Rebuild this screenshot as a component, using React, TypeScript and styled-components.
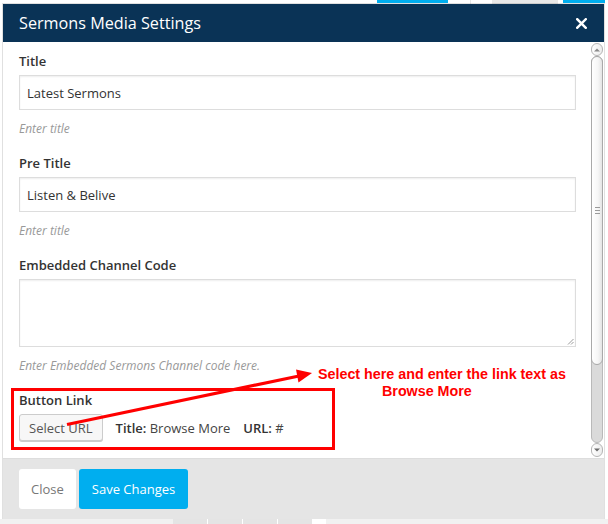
import React from "react";
import styled, { createGlobalStyle } from "styled-components";

const GlobalStyle = createGlobalStyle`
  html, body { margin: 0; padding: 0; background: #ffffff; }
  body { font-family: "Open Sans", "Liberation Sans", sans-serif; }
  * { box-sizing: border-box; }
`;

const Page = styled.div`
  position: relative;
  width: 608px;
  height: 524px;
  overflow: hidden;
  background: #ffffff;
  display: flex;
  flex-direction: column;
`;

const TopStrip = styled.div`
  height: 4px;
  display: flex;
  align-items: flex-start;
`;

const StripBlock = styled.div<{ $x: number; $w: number; $c: string; $h?: number }>`
  margin-left: ${(p) => p.$x}px;
  width: ${(p) => p.$w}px;
  height: ${(p) => p.$h ?? 3}px;
  background: ${(p) => p.$c};
  flex: none;
`;

const BottomStrip = styled.div`
  flex: 1;
  display: flex;
  background: #f1f1f1;
`;

const BottomBlock = styled.div<{ $w: number; $c: string }>`
  width: ${(p) => p.$w}px;
  background: ${(p) => p.$c};
  flex: none;
`;

const Modal = styled.div`
  margin-left: 3px;
  width: 601px;
  height: 515px;
  display: flex;
  flex-direction: column;
  background: #ffffff;
  box-shadow: 0 0 0 1px rgba(0, 0, 0, 0.12);
`;

const Header = styled.div`
  height: 38px;
  flex: none;
  background: #0a3356;
  display: flex;
  align-items: center;
  justify-content: space-between;
  padding: 0 17px 0 16px;
`;

const HeaderTitle = styled.div`
  color: #ffffff;
  font-size: 16.2px;
  font-weight: 400;
  padding-bottom: 1px;
`;

const CloseX = styled.svg`
  width: 11px;
  height: 11px;
  display: block;
`;

const Body = styled.div`
  height: 416px;
  flex: none;
  display: flex;
  padding: 1px 1px 1px 0;
`;

const Content = styled.div`
  flex: 1;
  padding: 9px 15px 0 16px;
  overflow: hidden;
`;

const Field = styled.div`
  margin-bottom: 17px;
`;

const Label = styled.div`
  font-size: 13px;
  line-height: 18px;
  font-weight: 600;
  color: #333333;
  margin-bottom: 5px;
`;

const TextInput = styled.div`
  height: 35px;
  border: 1px solid #dddddd;
  background: #ffffff;
  box-shadow: inset 0 1px 2px rgba(0, 0, 0, 0.07);
  display: flex;
  align-items: center;
  padding: 0 7px;
  font-size: 13px;
  color: #333333;
`;

const TextArea = styled.div`
  height: 68px;
  border: 1px solid #dddddd;
  background: #ffffff;
  box-shadow: inset 0 1px 2px rgba(0, 0, 0, 0.07);
  position: relative;
`;

const Grip = styled.svg`
  position: absolute;
  right: 1px;
  bottom: 1px;
  width: 7px;
  height: 7px;
`;

const Help = styled.div`
  margin-top: 10px;
  font-size: 12px;
  line-height: 17px;
  font-style: italic;
  color: #999999;
`;

const LinkRow = styled.div`
  display: flex;
  align-items: center;
  gap: 13px;
  font-size: 13px;
  color: #444444;
`;

const SelectButton = styled.div`
  height: 27px;
  padding: 0 9px;
  display: flex;
  align-items: center;
  border: 1px solid #cccccc;
  border-radius: 3px;
  background: #f7f7f7;
  box-shadow: 0 1px 0 #cccccc;
  color: #555555;
  font-size: 13px;
`;

const Meta = styled.span`
  color: #444444;
  b {
    font-weight: 600;
    color: #333333;
  }
`;

const Scrollbar = styled.div`
  width: 12px;
  flex: none;
  display: flex;
  flex-direction: column;
`;

const ScrollButton = styled.div<{ $h: number }>`
  height: ${(p) => p.$h}px;
  flex: none;
  border: 1px solid #b5b5b5;
  border-radius: 6px;
  background: linear-gradient(to right, #ffffff, #ececec);
  display: flex;
  align-items: center;
  justify-content: center;
`;

const Track = styled.div`
  flex: 1;
  display: flex;
  flex-direction: column;
  background: #dadada;
  border: 1px solid #b9b9b9;
  border-radius: 6px;
`;

const Thumb = styled.div`
  height: 309px;
  margin: -1px;
  border: 1px solid #a9a9a9;
  border-radius: 6px;
  background: linear-gradient(to right, #ffffff 0%, #f6f6f6 60%, #e4e4e4 100%);
  display: flex;
  align-items: center;
  justify-content: center;
`;

const Footer = styled.div`
  flex: 1;
  background: #e5e5e5;
  border-top: 1px solid #dddddd;
  display: flex;
  align-items: flex-start;
  gap: 3px;
  padding: 10px 16px 0;
`;

const FooterButton = styled.div<{ $primary?: boolean }>`
  height: 40px;
  display: flex;
  align-items: center;
  padding: 0 ${(p) => (p.$primary ? 13 : 12)}px;
  border-radius: 3px;
  font-size: 13px;
  background: ${(p) => (p.$primary ? "#00aeef" : "#ffffff")};
  color: ${(p) => (p.$primary ? "#ffffff" : "#777777")};
`;

const Annotation = styled.div`
  position: absolute;
  inset: 0;
  pointer-events: none;
`;

const RedBox = styled.div`
  position: absolute;
  left: 11px;
  top: 388px;
  width: 324px;
  height: 62px;
  border: 3px solid #ff0000;
`;

const ArrowSvg = styled.svg`
  position: absolute;
  left: 0;
  top: 0;
  width: 608px;
  height: 524px;
`;

const Note = styled.div`
  position: absolute;
  left: 318px;
  top: 366px;
  font-family: "Liberation Sans", Arial, sans-serif;
  font-weight: 700;
  font-size: 14.3px;
  line-height: 17px;
  color: #ff0000;
  white-space: nowrap;
`;

const NoteLine = styled.div<{ $indent?: number }>`
  padding-left: ${(p) => p.$indent ?? 0}px;
`;

export default function App() {
  return (
    <>
      <GlobalStyle />
      <Page>
        <TopStrip>
          <StripBlock $x={377} $w={71} $c="#00aeef" />
          <StripBlock $x={22} $w={1} $c="#e6e6e6" $h={4} />
          <StripBlock $x={21} $w={66} $c="#e8e8e8" $h={4} />
          <StripBlock $x={5} $w={42} $c="#00aeef" />
        </TopStrip>
        <Modal>
          <Header>
            <HeaderTitle>Sermons Media Settings</HeaderTitle>
            <CloseX viewBox="0 0 11 11">
              <path d="M1.2 1.2 L9.8 9.8 M9.8 1.2 L1.2 9.8" stroke="#ffffff" strokeWidth="2.4" strokeLinecap="square" />
            </CloseX>
          </Header>
          <Body>
            <Content>
              <Field>
                <Label>Title</Label>
                <TextInput>Latest Sermons</TextInput>
                <Help>Enter title</Help>
              </Field>
              <Field>
                <Label>Pre Title</Label>
                <TextInput>Listen &amp; Belive</TextInput>
                <Help>Enter title</Help>
              </Field>
              <Field>
                <Label>Embedded Channel Code</Label>
                <TextArea>
                  <Grip viewBox="0 0 7 7">
                    <path d="M6.5 1 L1 6.5 M6.5 4 L4 6.5" stroke="#9a9a9a" strokeWidth="1" />
                  </Grip>
                </TextArea>
                <Help>Enter Embedded Sermons Channel code here.</Help>
              </Field>
              <Field>
                <Label>Button Link</Label>
                <LinkRow>
                  <SelectButton>Select URL</SelectButton>
                  <Meta>
                    <b>Title:</b> Browse More
                  </Meta>
                  <Meta>
                    <b>URL:</b> #
                  </Meta>
                </LinkRow>
              </Field>
            </Content>
            <Scrollbar>
              <ScrollButton $h={13}>
                <svg width="6" height="4" viewBox="0 0 6 4">
                  <path d="M0 3.5 L3 0.5 L6 3.5 Z" fill="#8a8a8a" />
                </svg>
              </ScrollButton>
              <Track>
                <Thumb>
                  <svg width="5" height="7" viewBox="0 0 5 7">
                    <path d="M0 0.5 H5 M0 3.5 H5 M0 6.5 H5" stroke="#9a9a9a" strokeWidth="1" />
                  </svg>
                </Thumb>
              </Track>
              <ScrollButton $h={14}>
                <svg width="6" height="4" viewBox="0 0 6 4">
                  <path d="M0 0.5 L3 3.5 L6 0.5 Z" fill="#6a6a6a" />
                </svg>
              </ScrollButton>
            </Scrollbar>
          </Body>
          <Footer>
            <FooterButton>Close</FooterButton>
            <FooterButton $primary>Save Changes</FooterButton>
          </Footer>
        </Modal>
        <BottomStrip>
          <BottomBlock $w={173} $c="#f1f1f1" />
          <BottomBlock $w={34} $c="#e4e4e4" />
          <BottomBlock $w={1} $c="#ffffff" />
          <BottomBlock $w={34} $c="#e4e4e4" />
          <BottomBlock $w={1} $c="#ffffff" />
          <BottomBlock $w={34} $c="#e4e4e4" />
          <BottomBlock $w={1} $c="#ffffff" />
          <BottomBlock $w={34} $c="#e4e4e4" />
          <BottomBlock $w={14} $c="#ffffff" />
        </BottomStrip>
        <Annotation>
          <RedBox />
          <ArrowSvg viewBox="0 0 608 524">
            <line x1="67" y1="424.5" x2="299" y2="376" stroke="#ff0000" strokeWidth="3.2" />
            <polygon points="312,373 296,369.5 298.5,382.5" fill="#ff0000" />
          </ArrowSvg>
          <Note>
            <NoteLine>Select here and enter the link text as</NoteLine>
            <NoteLine $indent={64}>Browse More</NoteLine>
          </Note>
        </Annotation>
      </Page>
    </>
  );
}
